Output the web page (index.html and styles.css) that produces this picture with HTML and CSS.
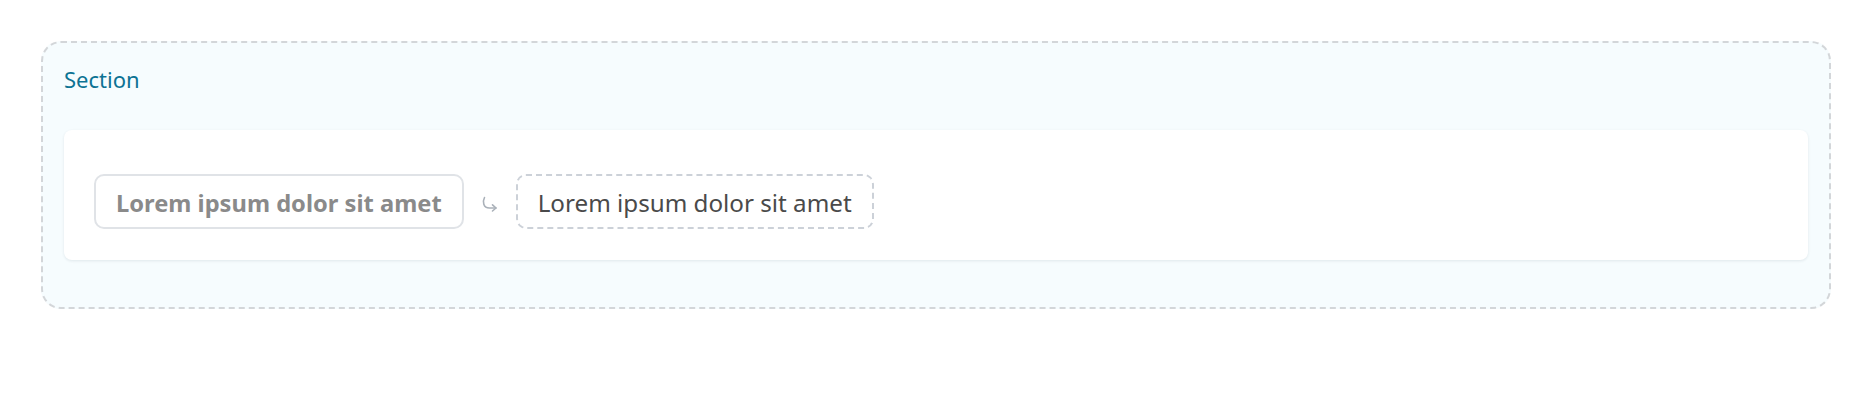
FILE: index.html
```html
<!DOCTYPE html>
<html lang="en">
<head>
<meta charset="utf-8">
<title>Section</title>
<link rel="stylesheet" href="styles.css">
</head>
<body>
<div class="page">
  <section class="section">
    <div class="section-title">Section</div>
    <div class="card">
      <div class="row">
        <div class="chip chip-source">Lorem ipsum dolor sit amet</div>
        <svg class="arrow" width="20" height="20" viewBox="0 0 20 20" aria-hidden="true">
          <path d="M4.5 3.5 C2.5 7.5 3 14 9.5 14 L16 14" fill="none" stroke="#aab1b9" stroke-width="1.6" stroke-linecap="round"/>
          <path d="M12.5 10.8 L16 14 L12.5 17" fill="none" stroke="#aab1b9" stroke-width="1.6" stroke-linecap="round" stroke-linejoin="round"/>
        </svg>
        <div class="chip chip-target">Lorem ipsum dolor sit amet</div>
      </div>
    </div>
  </section>
</div>
</body>
</html>
```
FILE: styles.css
```css
html, body {
  margin: 0;
  padding: 0;
  background: #ffffff;
}

body {
  font-family: "Noto Sans", "Open Sans", sans-serif;
}

.page {
  padding: 41px 41px;
}

.section {
  border: 2px dashed #d3d6d9;
  border-radius: 20px;
  background: #f6fcfe;
  padding: 21px 21px 47px 21px;
}

.section-title {
  font-size: 22px;
  line-height: 30px;
  color: #0d7394;
  margin-bottom: 36px;
}

.card {
  background: #ffffff;
  border-radius: 8px;
  box-shadow: 0 1px 3px rgba(30, 50, 70, 0.10);
  padding: 44px 30px 31px 30px;
}

.row {
  display: flex;
  align-items: center;
  gap: 16px;
}

.chip {
  box-sizing: border-box;
  height: 55px;
  display: flex;
  align-items: center;
  padding: 2px 21px 0 21px;
  border-radius: 10px;
  font-size: 24.2px;
  white-space: nowrap;
}

.chip-source {
  border: 2px solid #e0e3e7;
  color: #8a8a8a;
  font-weight: 700;
  font-size: 23.7px;
  padding: 2px 20px 0 20px;
}

.chip-target {
  border: 2px dashed #ccd1d8;
  color: #4a4a4a;
  font-weight: 400;
  padding: 2px 20px 0 20px;
}

.arrow {
  display: block;
  flex: none;
  margin-top: 4px;
}
```
